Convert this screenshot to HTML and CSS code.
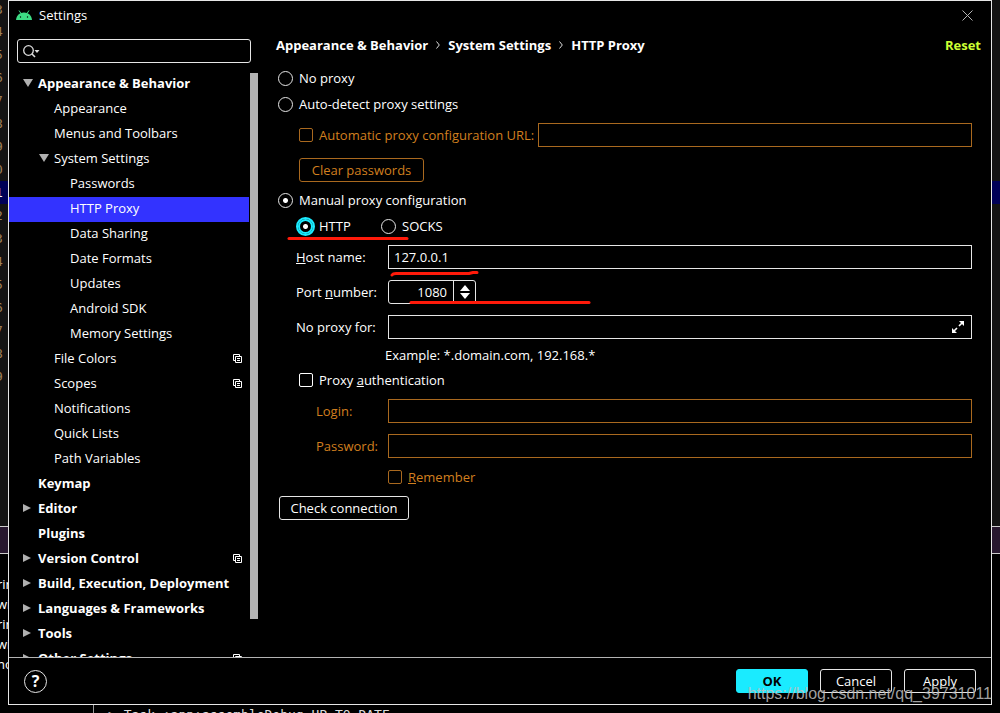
FILE: index.html
```html
<!DOCTYPE html>
<html lang="en">
<head>
    <meta charset="UTF-8">
    <meta name="viewport" content="width=device-width, initial-scale=1.0">
    <title>Settings</title>
    <link rel="stylesheet" href="styles.css">
</head>
<body>
    <!-- IDE window behind the dialog -->
    <div class="ide">
        <div class="editor">
            <div class="line">3</div>
            <div class="line">4</div>
            <div class="line">5</div>
            <div class="line">6</div>
            <div class="line">7</div>
            <div class="line">8</div>
            <div class="line">9</div>
            <div class="line">0</div>
            <div class="line current">1</div>
            <div class="line">2</div>
            <div class="line">3</div>
            <div class="line">4</div>
            <div class="line">5</div>
            <div class="line">6</div>
            <div class="line">7</div>
            <div class="line">8</div>
            <div class="line">9</div>
        </div>
        <div class="tool-header"></div>
        <div class="build">
            <div class="build-tree">
                <div>rin</div>
                <div>wit</div>
                <div>rin</div>
                <div>wit</div>
                <div>no</div>
            </div>
            <div class="build-output">&gt; Task :app:assembleDebug UP-TO-DATE</div>
        </div>
    </div>

    <div class="dialog">
        <header class="titlebar">
            <svg class="android" width="16" height="10" viewBox="0 0 16 10">
                <path d="M3 0.5 L5 3.5 M13 0.5 L11 3.5" stroke="#3ddc84" stroke-width="1"/>
                <path d="M0 10 C0.3 5.5 3.5 2.5 8 2.5 S15.7 5.5 16 10 Z" fill="#3ddc84"/>
                <circle cx="4.5" cy="7" r="0.7" fill="#000"/>
                <circle cx="11.5" cy="7" r="0.7" fill="#000"/>
            </svg>
            <span class="title">Settings</span>
            <button class="close" aria-label="Close">
                <svg width="11" height="11" viewBox="0 0 11 11"><path d="M0.5 0.5 L10.5 10.5 M10.5 0.5 L0.5 10.5" stroke="#b4b4b4"/></svg>
            </button>
        </header>

        <div class="content">
            <aside class="sidebar">
                <div class="search">
                    <svg width="17" height="13" viewBox="0 0 17 13">
                        <circle cx="5.5" cy="5.5" r="4.8" fill="none" stroke="#ddd" stroke-width="1.3"/>
                        <path d="M9 9 L12 12" stroke="#ddd" stroke-width="1.6"/>
                        <path d="M11.5 5 H16.5 L14 8 Z" fill="#ddd"/>
                    </svg>
                    <input type="text" aria-label="Search settings">
                </div>
                <div class="tree-wrap">
                    <ul class="tree">
                        <li class="top open">Appearance &amp; Behavior</li>
                        <li class="level-2">Appearance</li>
                        <li class="level-2">Menus and Toolbars</li>
                        <li class="level-2 open">System Settings</li>
                        <li class="level-3">Passwords</li>
                        <li class="level-3 selected">HTTP Proxy</li>
                        <li class="level-3">Data Sharing</li>
                        <li class="level-3">Date Formats</li>
                        <li class="level-3">Updates</li>
                        <li class="level-3">Android SDK</li>
                        <li class="level-3">Memory Settings</li>
                        <li class="level-2">File Colors <svg class="project"><use href="#project-icon"/></svg></li>
                        <li class="level-2">Scopes <svg class="project"><use href="#project-icon"/></svg></li>
                        <li class="level-2">Notifications</li>
                        <li class="level-2">Quick Lists</li>
                        <li class="level-2">Path Variables</li>
                        <li class="top">Keymap</li>
                        <li class="top closed">Editor</li>
                        <li class="top">Plugins</li>
                        <li class="top closed">Version Control <svg class="project"><use href="#project-icon"/></svg></li>
                        <li class="top closed">Build, Execution, Deployment</li>
                        <li class="top closed">Languages &amp; Frameworks</li>
                        <li class="top closed">Tools</li>
                        <li class="top closed">Other Settings <svg class="project"><use href="#project-icon"/></svg></li>
                    </ul>
                    <div class="scrollbar"><div class="thumb"></div></div>
                </div>
            </aside>

            <main class="page">
                <div class="page-header">
                    <nav class="crumbs">
                        <span>Appearance &amp; Behavior</span>
                        <svg width="4" height="8" viewBox="0 0 4 8"><path d="M0.5 0.5 L3.3 4 L0.5 7.5" fill="none" stroke="#ddd"/></svg>
                        <span>System Settings</span>
                        <svg width="4" height="8" viewBox="0 0 4 8"><path d="M0.5 0.5 L3.3 4 L0.5 7.5" fill="none" stroke="#ddd"/></svg>
                        <span>HTTP Proxy</span>
                    </nav>
                    <a class="reset" href="#">Reset</a>
                </div>

                <form class="form">
                    <label class="option"><input type="radio" name="mode">No proxy</label>
                    <label class="option"><input type="radio" name="mode">Auto-detect proxy settings</label>
                    <div class="row auto-row disabled">
                        <label class="check"><input type="checkbox" disabled>Automatic proxy configuration URL:</label>
                        <input class="field" type="text" aria-label="Configuration URL" disabled>
                    </div>
                    <button class="btn clear" type="button" disabled>Clear passwords</button>
                    <label class="option"><input type="radio" name="mode" checked>Manual proxy configuration</label>
                    <div class="types">
                        <label class="option"><input class="focused" type="radio" name="type" checked>HTTP</label>
                        <label class="option"><input type="radio" name="type">SOCKS</label>
                    </div>

                    <div class="fields">
                        <div class="row">
                            <label for="host"><u>H</u>ost name:</label>
                            <input class="field" id="host" type="text" value="127.0.0.1">
                        </div>
                        <div class="row">
                            <label for="port">Port <u>n</u>umber:</label>
                            <div class="spinner">
                                <input id="port" type="text" value="1080">
                                <div class="arrows">
                                    <button type="button" aria-label="Increase"><svg width="10" height="6" viewBox="0 0 10 6"><path d="M5 0 L10 6 H0 Z" fill="#fff"/></svg></button>
                                    <button type="button" aria-label="Decrease"><svg width="10" height="6" viewBox="0 0 10 6"><path d="M5 6 L10 0 H0 Z" fill="#fff"/></svg></button>
                                </div>
                            </div>
                        </div>
                        <div class="row">
                            <label for="exclude">No proxy for:</label>
                            <div class="field expandable">
                                <input id="exclude" type="text">
                                <svg width="12" height="12" viewBox="0 0 12 12">
                                    <path d="M7 0 H12 V5 Z M0 7 V12 H5 Z" fill="#fff"/>
                                    <path d="M10 2 L7 5 M2 10 L5 7" stroke="#fff" stroke-width="1.6"/>
                                </svg>
                            </div>
                        </div>
                    </div>
                    <div class="hint">Example: *.domain.com, 192.168.*</div>

                    <label class="check auth"><input type="checkbox"><span>Proxy <u>a</u>uthentication</span></label>
                    <div class="fields login disabled">
                        <div class="row">
                            <label for="login">Login:</label>
                            <input class="field" id="login" type="text" disabled>
                        </div>
                        <div class="row">
                            <label for="password">Password:</label>
                            <input class="field" id="password" type="password" disabled>
                        </div>
                    </div>
                    <label class="check remember disabled"><input type="checkbox" disabled><span><u>R</u>emember</span></label>
                    <button class="btn test" type="button">Check connection</button>
                </form>
            </main>
        </div>

        <footer class="footer">
            <button class="help" aria-label="Help">?</button>
            <button class="btn primary">OK</button>
            <button class="btn">Cancel</button>
            <button class="btn">Apply</button>
        </footer>

        <!-- red marker strokes -->
        <svg class="marks" width="310" height="70" viewBox="0 0 310 70">
            <g fill="none" stroke="#ff1a0a" stroke-width="3" stroke-linecap="round" stroke-linejoin="round">
                <path d="M3 3.5 H121"/>
                <path d="M106 40 Q107 38.5 110 38.5 H183 L187 37.5 H191"/>
                <path d="M125 67.5 H303"/>
            </g>
        </svg>
    </div>

    <div class="watermark">https://blog.csdn.net/qq_39731011</div>

    <svg class="defs">
        <symbol id="project-icon" viewBox="0 0 9 9">
            <path d="M2 6.5 H0.5 V0.5 H6.5 V2 M2.5 2.5 H8.5 V8.5 H2.5 Z M4 4.5 H7 M4 6.5 H7" fill="none" stroke="#fff"/>
        </symbol>
    </svg>
</body>
</html>
```
FILE: styles.css
```css
* {
    box-sizing: border-box;
}
body {
    margin: 0;
    height: 100vh;
    overflow: hidden;
    background-color: #000;
    color: #fff;
    font-family: "Open Sans", "Noto Sans", sans-serif;
    font-size: 13px;
    line-height: 18px;
}
button, input {
    margin: 0;
    padding: 0;
    font: inherit;
    color: inherit;
    background: none;
    border: none;
    outline: none;
}

/* window behind the dialog */
.ide {
    position: absolute;
    inset: 0;
    display: flex;
    flex-direction: column;
    overflow: hidden;
}
.editor {
    flex: 0 0 526px;
    background-color: #131313;
}
.line {
    height: 23px;
    line-height: 23px;
    text-indent: -5px;
    color: #a08058;
    font-family: "DejaVu Sans Mono", monospace;
}
.line:first-child {
    height: 20px;
    line-height: 20px;
}
.current {
    background-color: #000057;
    color: #fff;
}
.tool-header {
    flex: 0 0 28px;
    background-color: #28182f;
    border-top: 1px solid #ccc;
    border-bottom: 1px solid #ccc;
}
.build {
    flex: 1;
    display: flex;
}
.build-tree {
    width: 94px;
    padding-top: 20px;
    line-height: 20px;
    text-indent: -3px;
    border-right: 1px solid #999;
}
.build-output {
    align-self: flex-end;
    padding-left: 14px;
    line-height: 16px;
    margin-bottom: -10px;
    color: #ddd;
    font-family: "DejaVu Sans Mono", monospace;
    white-space: nowrap;
}

.dialog {
    position: relative;
    display: flex;
    flex-direction: column;
    height: calc(100vh - 8px);
    margin: 0 8px 8px;
    background-color: #000;
    border: 1px solid #e6e6e6;
}
.titlebar {
    display: flex;
    align-items: center;
    height: 28px;
    margin-bottom: 2px;
    padding: 0 18px 0 7px;
}
.title {
    flex: 1;
    margin-left: 7px;
}
.close {
    display: flex;
}
.content {
    flex: 1;
    display: flex;
    min-height: 0;
}

/* sidebar */
.sidebar {
    display: flex;
    flex-direction: column;
    width: 249px;
}
.search {
    display: flex;
    align-items: center;
    height: 24px;
    margin: 8px 7px 9px 8px;
    padding: 0 5px;
    border: 1px solid #e6e6e6;
    border-radius: 3px;
}
.search input {
    flex: 1;
    min-width: 0;
}
.tree-wrap {
    flex: 1;
    display: flex;
    min-height: 0;
}
.tree {
    flex: 1;
    margin: 0;
    padding: 0;
    list-style: none;
    overflow: hidden;
}
.tree li {
    display: flex;
    align-items: center;
    height: 25px;
    padding: 0 7px 3px 0;
    white-space: nowrap;
}
.tree li::before {
    content: "";
    width: 10px;
    margin: 0 5px 0 14px;
}
.tree .top {
    font-weight: bold;
}
.tree .level-2::before {
    margin-left: 30px;
}
.tree .level-3::before {
    margin-left: 46px;
}
.tree .open::before {
    height: 8px;
    background-color: #b0b0b0;
    clip-path: polygon(0 0, 100% 0, 50% 100%);
}
.tree .closed::before {
    width: 8px;
    height: 8px;
    margin-right: 7px;
    background-color: #b0b0b0;
    clip-path: polygon(0 0, 100% 50%, 0 100%);
}
.tree .selected {
    background-color: #3333ff;
}
.project {
    width: 9px;
    height: 9px;
    margin-left: auto;
}
.scrollbar {
    width: 9px;
    padding: 1px 0 38px 1px;
}
.thumb {
    height: 100%;
    background-color: #b3b3b3;
}

/* settings page */
.page {
    flex: 1;
    min-width: 0;
    padding-left: 18px;
}
.page-header {
    display: flex;
    align-items: center;
    justify-content: space-between;
    height: 28px;
    margin-bottom: 6px;
    padding-right: 10px;
    font-weight: bold;
}
.crumbs {
    display: flex;
    align-items: center;
    gap: 8px;
}
.reset {
    color: #ccff33;
    text-decoration: none;
}
.form {
    display: flex;
    flex-direction: column;
    padding: 0 19px 0 2px;
}
.option, .check {
    display: flex;
    align-items: center;
    height: 26px;
    gap: 6px;
}
input[type="radio"] {
    appearance: none;
    width: 15px;
    height: 15px;
    border: 1px solid #e6e6e6;
    border-radius: 50%;
}
input[type="radio"]:checked {
    background: radial-gradient(circle, #fff 2px, transparent 3px);
}
input.focused {
    outline: 2px solid #1aebff;
    border: 1px solid #1aebff;
}
input[type="checkbox"] {
    appearance: none;
    width: 14px;
    height: 14px;
    border: 1px solid currentColor;
    border-radius: 2px;
}
.disabled {
    color: #d17f1f;
}
.row {
    display: flex;
    align-items: center;
    height: 24px;
}
.auto-row {
    gap: 4px;
    margin: 6px 0 11px 21px;
}
.field {
    flex: 1;
    min-width: 0;
    height: 24px;
    padding: 0 5px;
    border: 1px solid #e6e6e6;
}
.disabled .field, .disabled input, .btn:disabled {
    border-color: #a9691f;
}
.btn {
    height: 24px;
    width: 72px;
    border: 1px solid #e6e6e6;
    border-radius: 3px;
}
.btn.clear {
    width: 125px;
    margin: 0 0 5px 21px;
    color: #d17f1f;
}
.types {
    display: flex;
    margin: 0 0 6px 20px;
}
.types .option {
    width: 83px;
}
.types .focused {
    outline-width: 2px;
    border-width: 2px;
}
.fields {
    display: flex;
    flex-direction: column;
    gap: 11px;
    margin-left: 18px;
}
.fields label {
    width: 92px;
}
.spinner {
    display: flex;
    width: 88px;
    height: 24px;
    border: 1px solid #e6e6e6;
    border-radius: 3px;
}
.spinner input {
    flex: 1;
    min-width: 0;
    padding-right: 6px;
    text-align: right;
}
.arrows {
    display: flex;
    flex-direction: column;
    justify-content: center;
    align-items: center;
    gap: 2px;
    width: 22px;
    border-left: 1px solid #e6e6e6;
}
.arrows button {
    display: flex;
}
.expandable {
    display: flex;
    align-items: center;
    padding-right: 7px;
}
.expandable input {
    flex: 1;
}
.hint {
    margin: 4px 0 0 107px;
    line-height: 24px;
}
.auth {
    margin: 0 0 6px 21px;
}
.login {
    margin-left: 38px;
}
.login label {
    width: 72px;
}
.remember {
    margin: 6px 0 6px 110px;
}
.btn.test {
    width: 130px;
    margin-left: 1px;
}

.footer {
    display: flex;
    align-items: center;
    gap: 12px;
    height: 47px;
    padding: 0 15px;
    border-top: 1px solid #b3b3b3;
}
.help {
    width: 23px;
    height: 23px;
    margin-right: auto;
    border: 1px solid #e6e6e6;
    border-radius: 50%;
    font-size: 16px;
    font-weight: bold;
    line-height: 21px;
}
.btn.primary {
    background-color: #1aebff;
    border-color: #1aebff;
    color: #000;
    font-weight: bold;
}

.marks {
    position: absolute;
    left: 277px;
    top: 234px;
    pointer-events: none;
}
.watermark {
    position: absolute;
    right: 8px;
    bottom: 9px;
    font-family: "Liberation Sans", Arial, sans-serif;
    font-size: 16px;
    line-height: 20px;
    color: rgba(190, 190, 190, 0.85);
}
.defs {
    display: none;
}
```
